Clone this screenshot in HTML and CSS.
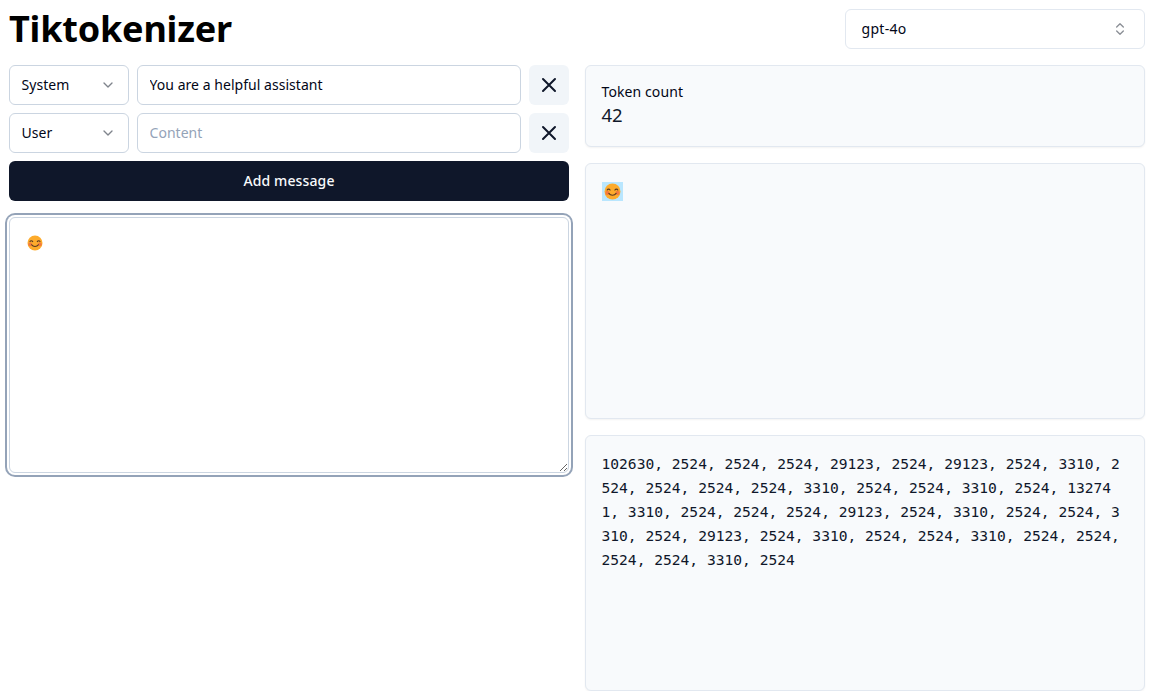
FILE: index.html
```html
<!DOCTYPE html>
<html lang="en">
<head>
<meta charset="utf-8">
<title>Tiktokenizer</title>
<link rel="stylesheet" href="styles.css">
</head>
<body>
<svg class="defs" width="0" height="0" aria-hidden="true">
  <defs>
    <symbol id="smile" viewBox="0 0 16 16">
      <circle cx="8" cy="8" r="7.5" fill="#fdab2c"/>
      <circle cx="3.2" cy="9.3" r="1.9" fill="#ef6a45" opacity=".75"/>
      <circle cx="12.8" cy="9.3" r="1.9" fill="#ef6a45" opacity=".75"/>
      <path d="M3 6.6c.6-1.2 2-1.2 2.7 0M10.3 6.6c.7-1.2 2.100-1.200 2.700 0M4.600 9.800c1.500 2.300 5.300 2.300 6.800 0" fill="none" stroke="#5a3a22" stroke-width="1.100" stroke-linecap="round"/>
    </symbol>
    <symbol id="chev" viewBox="0 0 24 24">
      <path d="m6 9 6 6 6-6" fill="none" stroke="currentColor" stroke-width="2" stroke-linecap="round" stroke-linejoin="round"/>
    </symbol>
    <symbol id="close" viewBox="0 0 24 24">
      <path d="M18 6 6 18M6 6l12 12" fill="none" stroke="currentColor" stroke-width="2" stroke-linecap="round" stroke-linejoin="round"/>
    </symbol>
  </defs>
</svg>
<main class="page">
  <header class="top">
    <h1 class="title">Tiktokenizer</h1>
    <button class="model" type="button">
      <span class="label">gpt-4o</span>
      <svg class="updown" viewBox="0 0 24 24"><path d="m7 15 5 5 5-5M7 9l5-5 5 5" fill="none" stroke="currentColor" stroke-width="2" stroke-linecap="round" stroke-linejoin="round"/></svg>
    </button>
  </header>
  <div class="columns">
    <section class="left">
      <div class="row">
        <button class="role" type="button"><span class="label">System</span><svg class="chev"><use href="#chev"/></svg></button>
        <input class="content" type="text" value="You are a helpful assistant">
        <button class="remove" type="button" aria-label="Remove"><svg class="x"><use href="#close"/></svg></button>
      </div>
      <div class="row">
        <button class="role" type="button"><span class="label">User</span><svg class="chev"><use href="#chev"/></svg></button>
        <input class="content" type="text" placeholder="Content">
        <button class="remove" type="button" aria-label="Remove"><svg class="x"><use href="#close"/></svg></button>
      </div>
      <button class="add" type="button"><span class="label">Add message</span></button>
      <div class="area-wrap">
        <textarea class="area"></textarea>
        <svg class="area-emoji"><use href="#smile"/></svg>
      </div>
    </section>
    <section class="right">
      <div class="card count">
        <div class="count-label">Token count</div>
        <div class="count-value">42</div>
      </div>
      <div class="card segments">
        <span class="segment"><svg class="seg-emoji"><use href="#smile"/></svg></span>
      </div>
      <div class="card tokens">102630, 2524, 2524, 2524, 29123, 2524, 29123, 2524, 3310, 2524, 2524, 2524, 2524, 3310, 2524, 2524, 3310, 2524, 132741, 3310, 2524, 2524, 2524, 29123, 2524, 3310, 2524, 2524, 3310, 2524, 29123, 2524, 3310, 2524, 2524, 3310, 2524, 2524, 2524, 2524, 3310, 2524</div>
    </section>
  </div>
</main>
</body>
</html>
```

FILE: styles.css
```css
* { box-sizing: border-box; }
html, body { margin: 0; background: #fff; }
body {
  font-family: "Noto Sans", "Open Sans", sans-serif;
  font-size: 14px;
  letter-spacing: 0.04px;
  color: #020617;
}
.defs { position: absolute; }
button, input, textarea { font: inherit; letter-spacing: inherit; color: inherit; margin: 0; }
.label { display: block; padding-bottom: 2px; }
.page { padding: 9px 8px 0 9px; display: flex; flex-direction: column; gap: 16px; }
.top { display: flex; justify-content: space-between; align-items: flex-start; height: 40px; }
.title { margin: 0; font-size: 36px; line-height: 40px; font-weight: 700; color: #000; letter-spacing: -0.2px; }
.model {
  width: 300px; height: 40px; padding: 0 16px 0 15.5px;
  display: flex; align-items: center; justify-content: space-between;
  background: #fff; border: 1px solid #e2e8f0; border-radius: 6px;
  letter-spacing: 0.3px;
}
.updown { width: 16px; height: 16px; color: #8b8f96; }
.columns { display: grid; grid-template-columns: 560px 560px; column-gap: 16px; }
.left, .right { display: flex; flex-direction: column; }
.left { gap: 8px; }
.right { gap: 16px; }
.row { display: flex; gap: 8px; height: 40px; }
.role {
  flex: 0 0 120px; padding: 0 12px 0 11.5px;
  display: flex; align-items: center; justify-content: space-between;
  background: #fff; border: 1px solid #cbd5e1; border-radius: 6px;
}
.chev { width: 16px; height: 16px; color: #7f848c; }
.content {
  flex: 1; min-width: 0; padding: 0 12px 2px 11.5px;
  background: #fff; border: 1px solid #cbd5e1; border-radius: 6px; outline: none;
}
.content::placeholder { color: #94a3b8; opacity: 1; }
.remove {
  flex: 0 0 40px; padding: 0;
  display: flex; align-items: center; justify-content: center;
  background: #f1f5f9; border: 0; border-radius: 6px; color: #0f172a;
}
.x { width: 24px; height: 24px; }
.add {
  height: 40px; background: #0f172a; color: #f8fafc; border: 0; border-radius: 6px; font-weight: 500; letter-spacing: 0.12px;
}
.area-wrap { position: relative; margin-top: 8px; height: 256px; }
.area {
  display: block; width: 100%; height: 100%; padding: 8px 12px;
  background: #fff; border: 1px solid #cbd5e1; border-radius: 6px; resize: vertical;
  outline: none; box-shadow: 0 0 0 2px #fff, 0 0 0 4px #94a3b8;
}
.area-emoji { position: absolute; left: 18px; top: 18px; width: 16px; height: 16px; }
.card {
  background: #f8fafc; border: 1px solid #e2e8f0; border-radius: 6px;
  box-shadow: 0 1px 2px rgba(0, 0, 0, 0.05);
}
.count { height: 82px; padding: 16px 16px 16px 15.5px; }
.count-label { line-height: 20px; letter-spacing: 0.1px; }
.count-value { font-size: 18.5px; line-height: 28px; margin-top: -1px; color: #0f172a; }
.segments { height: 256px; padding: 16px; display: flex; align-items: flex-start; }
.segment { display: flex; align-items: center; justify-content: center; width: 21px; height: 19px; margin-top: 2px; background: #b9e6fe; }
.seg-emoji { width: 17px; height: 17px; }
.tokens {
  height: 256px; padding: 16px 16px 16px 15.5px;
  font-family: "DejaVu Sans Mono", monospace; font-size: 14.6px; line-height: 24px; letter-spacing: normal;
  word-break: break-all; color: #0f172a;
}
```
